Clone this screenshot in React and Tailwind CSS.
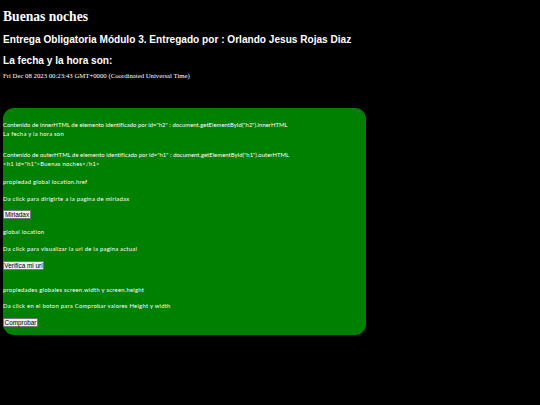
import React from "react";

const serif = "font-['Liberation_Serif',serif]";
const sans = "font-['Liberation_Sans',sans-serif]";

function Line({ children, className = "" }) {
  return (
    <p className={`font-['Lato',sans-serif] font-normal text-[5.9px] leading-[9px] h-[9px] whitespace-nowrap text-white ${className}`}>
      {children}
    </p>
  );
}

function Btn({ children, className = "" }) {
  return (
    <button className={`block h-[9px] p-0 bg-[#efefef] border border-[#767676] rounded-[1px] whitespace-nowrap text-black text-[6.4px] leading-[7px] text-center ${sans} ${className}`}>
      {children}
    </button>
  );
}

export default function App() {
  return (
    <div className="w-[540px] h-[405px] bg-black text-white overflow-hidden pl-[3px]">
      {/* HEADINGS */}
      <h1 className={`${serif} font-bold text-[13.6px] leading-[17px] pt-[8px] h-[25px]`}>Buenas noches</h1>
      <h2 className={`${sans} font-bold text-[10.1px] leading-[13px] mt-[8px] whitespace-nowrap`}>
        Entrega Obligatoria Módulo 3. Entregado por : Orlando Jesus Rojas Diaz
      </h2>
      <h2 className={`${sans} font-bold text-[10.1px] leading-[13px] mt-[8px]`}>La fecha y la hora son:</h2>
      <p className={`${serif} text-[6.75px] leading-[8px] mt-[5px] whitespace-nowrap`}>
        Fri Dec 08 2023 00:23:43 GMT+0000 (Coordinated Universal Time)
      </p>

      {/* PANEL */}
      <div className="w-[363px] h-[227px] mt-[28px] bg-[#008000] rounded-[11px] pt-[12px]">
        <Line className="tracking-[0.04px]">Contenido de innerHTML de elemento identificado por id="h2" : document.getElementById("h2").innerHTML</Line>
        <Line className="tracking-[0.25px]">La fecha y la hora son</Line>
        <Line className="mt-[12px] tracking-[0.04px]">Contenido de outerHTML de elemento identificado por id="h1" : document.getElementById("h1").outerHTML</Line>
        <Line className="tracking-[0.25px]">&lt;h1 id="h1"&gt;Buenas noches&lt;/h1&gt;</Line>
        <Line className="mt-[9px] tracking-[0.25px]">propiedad global location.href</Line>
        <Line className="mt-[8px] tracking-[0.25px]">Da click para dirigirte a la pagina de miriadax</Line>
        <Btn className="w-[28px] mt-[7px]">Miriadax</Btn>
        <Line className="mt-[8px] tracking-[0.25px]">global location</Line>
        <Line className="mt-[8px] tracking-[0.25px]">Da click para visualizar la url de la pagina actual</Line>
        <Btn className="w-[41px] mt-[8px]">Verifica mi url</Btn>
        <Line className="mt-[15px] tracking-[0.25px]">propiedades globales screen.width y screen.height</Line>
        <Line className="mt-[7px] tracking-[0.25px]">Da click en el boton para Comprobar valores Height y width</Line>
        <Btn className="w-[35px] mt-[8px]">Comprobar</Btn>
      </div>
    </div>
  );
}
